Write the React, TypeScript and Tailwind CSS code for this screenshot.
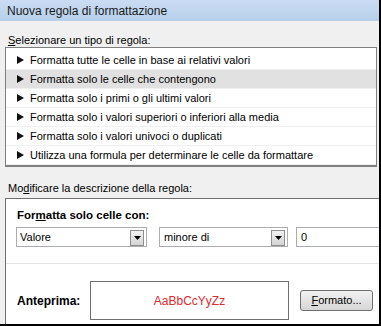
import React from "react";

const rows = [
  "Formatta tutte le celle in base ai relativi valori",
  "Formatta solo le celle che contengono",
  "Formatta solo i primi o gli ultimi valori",
  "Formatta solo i valori superiori o inferiori alla media",
  "Formatta solo i valori univoci o duplicati",
  "Utilizza una formula per determinare le celle da formattare",
];

function DropBtn() {
  return (
    <div className="absolute right-[2px] top-[2px] w-[14px] h-[16px] border border-[#8e8f8f] bg-gradient-to-b from-[#f2f2f2] to-[#d4d4d4] flex items-center justify-center">
      <svg width="7" height="4" viewBox="0 0 7 4">
        <path d="M0 0 H7 L3.5 4 Z" fill="#000" />
      </svg>
    </div>
  );
}

export default function App() {
  return (
    <div
      className="relative w-[381px] h-[326px] bg-[#f0f0f0] border-r-2 border-b-2 border-black flex flex-col overflow-hidden text-[11px] text-black"
      style={{ fontFamily: '"Liberation Sans", Arial, sans-serif' }}
    >
      <div className="h-[21px] shrink-0 bg-gradient-to-b from-[#cadcf3] to-[#b6cfea] pl-[7px] flex items-center text-[12px] text-[#1a1a1a]">
        Nuova regola di formattazione
      </div>
      <div className="mt-[12px] pl-[8px] h-[14px] leading-[14px]">
        <span className="underline">S</span>elezionare un tipo di regola:
      </div>
      <div className="ml-[5px] w-[372px] bg-white border border-[#7f7f7f] border-b-2 pt-[3px] flex flex-col">
        {rows.map((r, i) => (
          <div
            key={i}
            className={
              "h-[19px] flex items-center pl-[11px] border-b border-[#f0f0f0] " +
              (i === 1 ? "bg-[#e1e1e1]" : "")
            }
          >
            <svg width="7" height="8" viewBox="0 0 7 8" className="mr-[6px] shrink-0">
              <path d="M0 0 L7 4 L0 8 Z" fill="#111" />
            </svg>
            <span>{r}</span>
          </div>
        ))}
      </div>
      <div className="mt-[14px] pl-[8px] h-[14px] leading-[14px]">
        Mo<span className="underline">d</span>ificare la descrizione della regola:
      </div>
      <div className="mt-[3px] ml-[5px] flex-1 bg-white border-l border-t border-[#707070] flex flex-col">
        <div className="mt-[9px] pl-[11px] h-[14px] leading-[14px] font-bold text-[11.5px]">
          For<span className="underline">m</span>atta solo celle con:
        </div>
        <div className="mt-[5px] flex pl-[10px]">
          <div className="relative w-[131px] h-[20px] border border-[#abadb3] bg-white pl-[3px] flex items-center">
            Valore
            <DropBtn />
          </div>
          <div className="relative ml-[12px] w-[129px] h-[20px] border border-[#abadb3] bg-white pl-[4px] flex items-center">
            minore di
            <DropBtn />
          </div>
          <div className="ml-[8px] flex-1 h-[20px] border border-[#abadb3] border-r-0 bg-white pl-[4px] flex items-center">
            0
          </div>
        </div>
        <div className="mt-[16px] h-px bg-[#e3e3e3]" />
        <div className="mt-[17px] flex items-center pl-[11px]">
          <div className="w-[73px] font-bold text-[12px]">Anteprima:</div>
          <div className="w-[199px] h-[39px] border border-[#6f6f6f] bg-white flex items-center justify-center text-[#e0282f] text-[12px]">
            AaBbCcYyZz
          </div>
          <div className="ml-[11px] w-[73px] h-[21px] rounded-[3px] border border-[#707070] bg-gradient-to-b from-[#f2f2f2] to-[#d6d6d6] flex items-center justify-center">
            <span className="underline">F</span>ormato...
          </div>
        </div>
      </div>
    </div>
  );
}
